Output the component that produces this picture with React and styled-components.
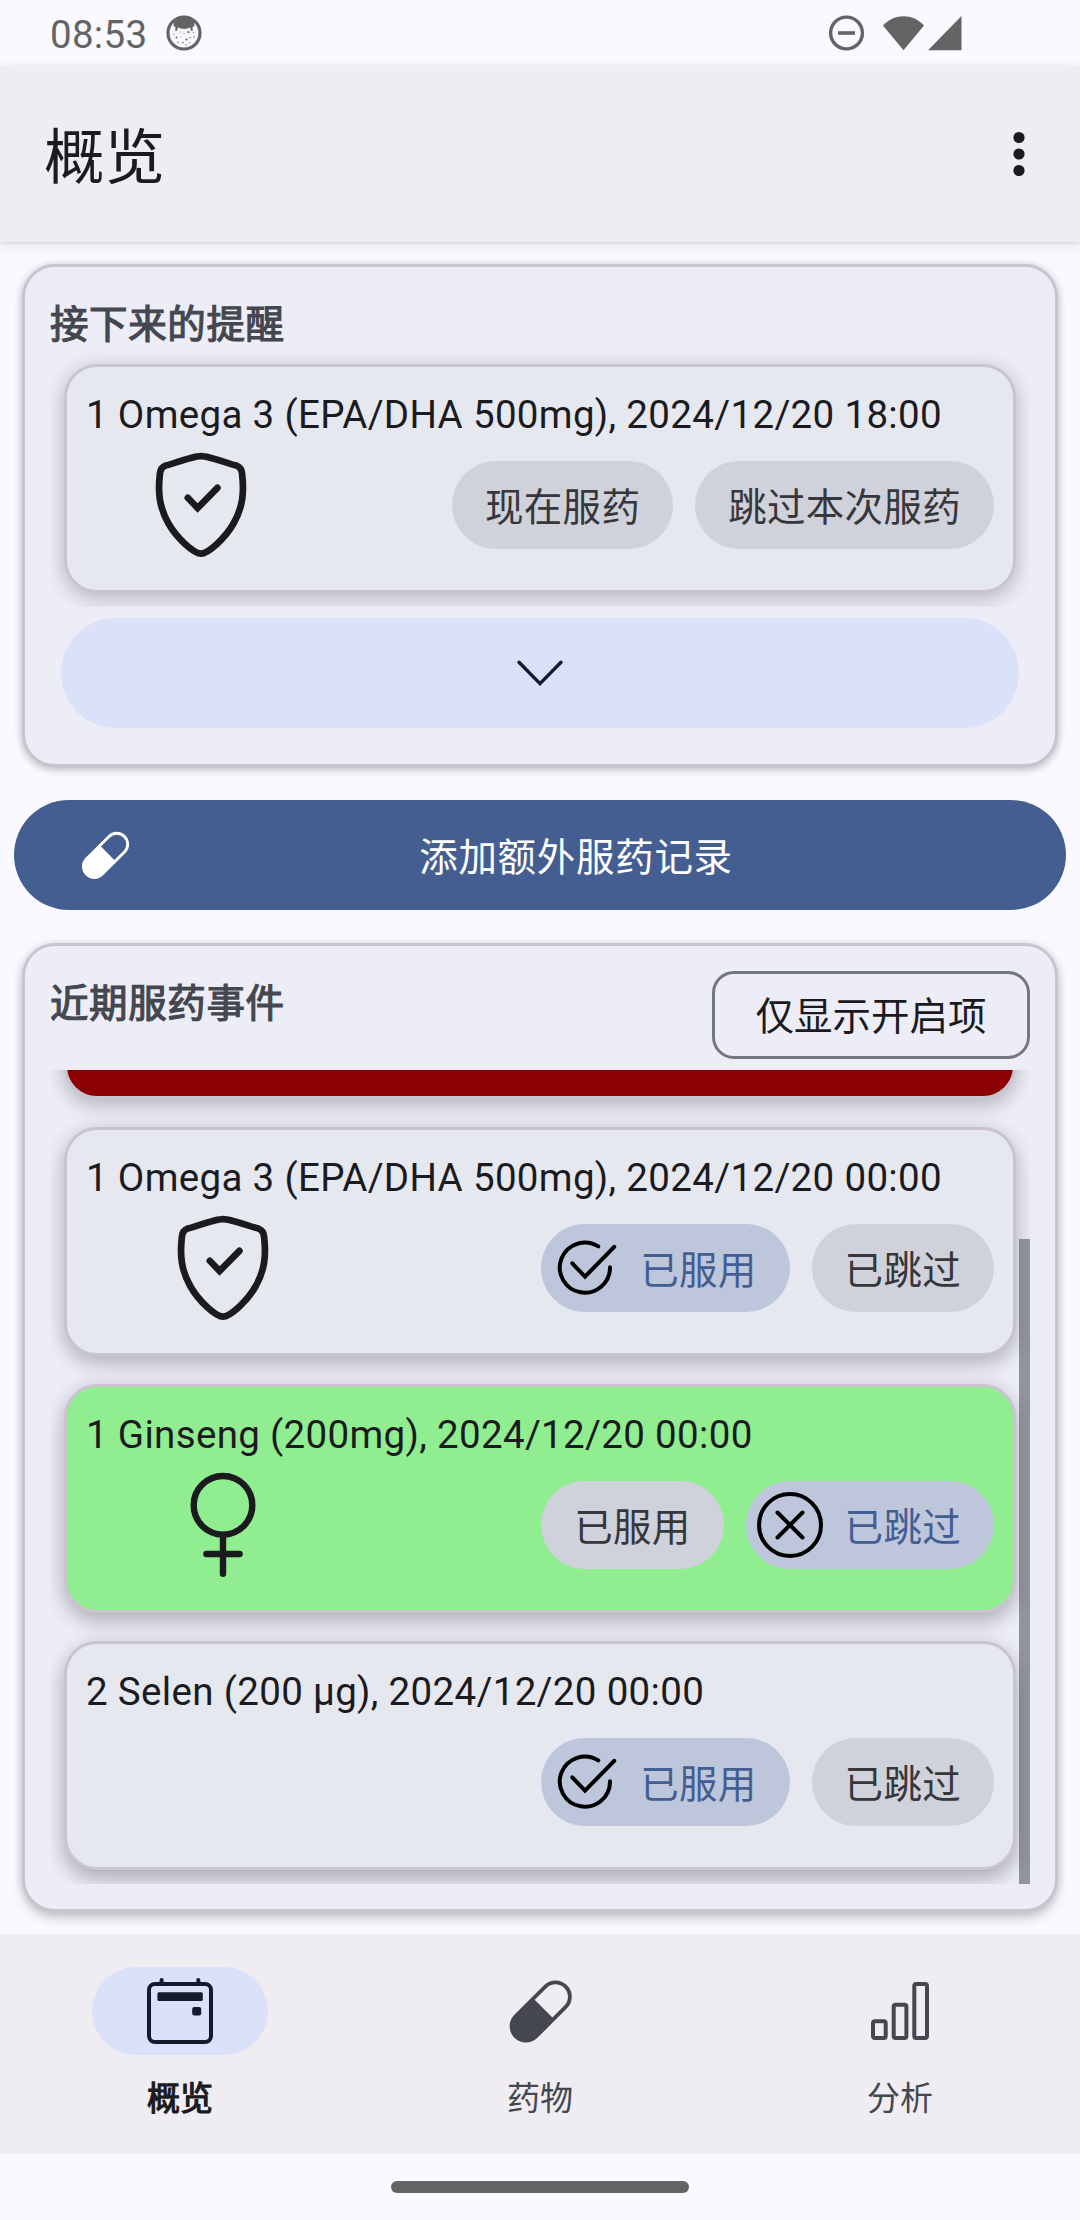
import React from "react";
import styled, { createGlobalStyle, css } from "styled-components";

const GlobalStyle = createGlobalStyle`
  *, *::before, *::after { box-sizing: border-box; }
  html, body { margin: 0; padding: 0; }
  body {
    background: #faf9ff;
    font-family: Roboto, "Noto Sans CJK SC", sans-serif;
    color: #1b1b1f;
  }
  button { font: inherit; color: inherit; border: 0; margin: 0; padding: 0; background: none; }
  svg { display: block; flex: none; }
`;

const Screen = styled.div`
  width: 1080px;
  height: 2220px;
  display: flex;
  flex-direction: column;
  background: #faf9ff;
  overflow: hidden;
`;

const StatusBar = styled.div`
  flex: none;
  height: 66px;
  padding: 0 118px 0 50px;
  display: flex;
  align-items: center;
  color: #646464;
`;

const Clock = styled.span`
  font-size: 38.5px;
  line-height: 66px;
  height: 66px;
  padding-top: 2px;
  letter-spacing: 0.3px;
  margin-right: 18.5px;
`;

const StatusIcons = styled.div`
  margin-left: auto;
  display: flex;
  align-items: center;
`;

const AppBar = styled.header`
  flex: none;
  height: 176px;
  padding: 0 44px;
  display: flex;
  align-items: center;
  justify-content: space-between;
  background: #efedf1;
  box-shadow: 0 1px 3px rgba(0, 0, 0, 0.12), 0 3px 14px rgba(0, 0, 0, 0.09);
`;

const AppTitle = styled.h1`
  margin: 0;
  padding-top: 10px;
  font-size: 60.5px;
  line-height: 80px;
  font-weight: 400;
`;

const MenuButton = styled.button`
  width: 34px;
  height: 66px;
  display: flex;
  justify-content: center;
  align-items: center;
`;

const Content = styled.main`
  flex: 1;
  min-height: 0;
  display: flex;
  flex-direction: column;
  padding: 22px 14px;
`;

const Panel = styled.section`
  flex: none;
  margin: 0 8px;
  height: ${(p) => p.$height}px;
  padding: ${(p) => p.$top}px 25px 0;
  border: 3px solid #cac4d0;
  border-radius: 33px;
  background: #ecedf6;
  box-shadow: 0 ${(p) => p.$lift}px ${(p) => p.$lift + 6}px rgba(0, 0, 0, 0.2),
    0 0 8px rgba(0, 0, 0, 0.1);
`;

const PanelHeader = styled.div`
  display: flex;
  justify-content: space-between;
  align-items: flex-start;
  height: ${(p) => p.$height}px;
`;

const PanelTitle = styled.h2`
  margin: 0;
  padding-top: ${(p) => p.$drop}px;
  font-size: 38.5px;
  line-height: 56px;
  letter-spacing: 0.6px;
  font-weight: 400;
  -webkit-text-stroke: 1.2px currentColor;
  color: #44474f;
`;

const OutlineButton = styled.button`
  width: 318px;
  height: 88px;
  padding-top: 4px;
  border: 3px solid #75777f;
  border-radius: 22px;
  font-size: 38.5px;
  line-height: 78px;
  text-align: center;
`;

const List = styled.div`
  position: relative;
  height: ${(p) => p.$height}px;
  overflow: hidden;
  display: flex;
  flex-direction: column;
  justify-content: flex-end;
  gap: 28px;
  padding: 14px;
`;

const ScrollThumb = styled.div`
  position: absolute;
  right: 0;
  bottom: 0;
  width: 11px;
  height: 645px;
  background: rgba(88, 92, 102, 0.62);
`;

const EventCard = styled.article`
  flex: none;
  height: 229px;
  padding: 19px 19px 0;
  border: 3px solid #cac4d0;
  border-radius: 33px;
  background: ${(p) => p.$color || "#e6e8f0"};
  box-shadow: 0 ${(p) => p.$lift + 1}px 20px rgba(0, 0, 0, ${(p) => 0.1 + p.$lift * 0.013}),
    0 2px 22px rgba(0, 0, 0, 0.09);
`;

const EventText = styled.div`
  height: 64px;
  padding-top: 1px;
  font-size: 38.5px;
  line-height: 55px;
  letter-spacing: 0.33px;
  white-space: nowrap;
`;

const EventRow = styled.div`
  height: 110px;
  display: flex;
  align-items: center;
  gap: 22px;
`;

const MedicineIcon = styled.div`
  flex: 1;
  display: flex;
  padding-left: 2px;
  &::before { content: ""; flex: 1; }
  &::after { content: ""; flex: 3; }
`;

const Chip = styled.button`
  height: 88px;
  padding: 0 33px;
  border-radius: 44px;
  display: flex;
  align-items: center;
  gap: 22px;
  font-size: 38.5px;
  letter-spacing: 0.3px;
  background: #cfd2da;
  color: #36363b;
  ${(p) =>
    p.$checked &&
    css`
      padding-left: 11px;
      background: #bdc6da;
      color: #435e93;
    `}
`;

const ChipLabel = styled.span`
  line-height: 56px;
  padding-top: 5px;
`;

const ExpandButton = styled.button`
  display: flex;
  align-items: center;
  justify-content: center;
  width: 958px;
  height: 110px;
  margin: 11px 11px 0;
  border-radius: 55px;
  background: #dce1fa;
`;

const AddButton = styled.button`
  flex: none;
  height: 110px;
  margin: 33px 0;
  padding: 0 66px;
  border-radius: 55px;
  display: flex;
  align-items: center;
  background: #455e91;
  color: #fff;
`;

const AddLabel = styled.span`
  flex: 1;
  padding: 6px 0 0 22px;
  font-size: 38.5px;
  line-height: 56px;
  letter-spacing: 0.7px;
  text-align: center;
`;

const NavBar = styled.nav`
  flex: none;
  height: 220px;
  display: grid;
  grid-template-columns: repeat(3, 1fr);
  background: #efedf1;
`;

const NavItem = styled.div`
  display: flex;
  flex-direction: column;
  align-items: center;
  padding-top: 33px;
  font-size: 33px;
  -webkit-text-stroke: ${(p) => (p.$active ? "1.2px" : "0")} currentColor;
  color: ${(p) => (p.$active ? "#1b1b1f" : "#44474f")};
`;

const NavIndicator = styled.div`
  width: 176px;
  height: 88px;
  border-radius: 44px;
  display: flex;
  align-items: center;
  justify-content: center;
  background: ${(p) => (p.$active ? "#dce1fa" : "transparent")};
  color: ${(p) => (p.$active ? "#151b2c" : "#44474f")};
`;

const NavLabel = styled.span`
  margin-top: 20px;
  line-height: 48px;
`;

const GestureArea = styled.div`
  flex: none;
  height: 66px;
  padding-top: 27px;
  display: flex;
  justify-content: center;
`;

const GestureHandle = styled.div`
  width: 298px;
  height: 12px;
  border-radius: 6px;
  background: #646464;
`;

const FaceIcon = () => (
  <svg width="36" height="36" viewBox="0 0 36 36">
    <circle cx="18" cy="18" r="16" fill="none" stroke="currentColor" strokeWidth="3.2" />
    <path
      fill="currentColor"
      d="M8 6C13 1 23 1 28 6L28.5 11L26.5 12L26.8 16L25 15.8L24 12.3C21 14.5 15 14.5 12 12.3L11 15.8L9.2 16L9.5 12L7.5 11Z"
    />
    <g fill="currentColor">
      <circle cx="10.5" cy="22.5" r="1" />
      <circle cx="20.5" cy="24.5" r="1.1" />
      <circle cx="22.5" cy="17.2" r="1.1" />
      <circle cx="14" cy="17" r="0.6" />
      <circle cx="18" cy="18.5" r="0.6" />
      <circle cx="15" cy="22" r="0.6" />
      <circle cx="24" cy="22.5" r="0.7" />
      <circle cx="28" cy="22" r="0.7" />
      <circle cx="8" cy="19" r="0.6" />
      <circle cx="27.5" cy="17.5" r="0.6" />
      <circle cx="12" cy="27.5" r="0.7" />
      <circle cx="17" cy="27.5" r="0.8" />
      <circle cx="23.5" cy="27.5" r="0.6" />
      <circle cx="20" cy="30" r="0.7" />
    </g>
  </svg>
);

const SystemIcons = () => (
  <svg width="134" height="36" viewBox="0 0 134 36" fill="currentColor">
    <circle cx="18.5" cy="18" r="15.9" fill="none" stroke="currentColor" strokeWidth="3.4" />
    <rect x="10" y="16.2" width="17" height="3.6" />
    <path d="M55 10.5C66.5-1.8 84.5-1.8 96 10.5L75.5 35.2Z" />
    <path d="M133.5 1V35.3H100Z" />
  </svg>
);

const MoreIcon = () => (
  <svg width="12" height="46" viewBox="0 0 12 46" fill="currentColor">
    <circle cx="6" cy="6.5" r="5.6" />
    <circle cx="6" cy="23" r="5.6" />
    <circle cx="6" cy="39.5" r="5.6" />
  </svg>
);

const ShieldIcon = () => (
  <svg width="110" height="110" viewBox="0 0 110 110" fill="none" stroke="currentColor" strokeWidth="6.7">
    <path d="M55 6.2C47 6.2 30 12.8 19.5 15.6C15.5 17 14.3 19.5 13.9 24C11.8 42 13 57 22.5 73.5C31 88.5 48 103.6 55 103.6C62 103.6 79 88.5 87.5 73.5C97 57 98.2 42 96.1 24C95.7 19.5 94.5 17 90.5 15.6C80 12.8 63 6.2 55 6.2Z" />
    <path d="M41.8 47.8L51.6 58L71.4 37.8" strokeLinecap="round" />
  </svg>
);

const FemaleIcon = () => (
  <svg width="110" height="110" viewBox="0 0 110 110" fill="none" stroke="currentColor" strokeWidth="6.4">
    <circle cx="55" cy="35.3" r="29.3" />
    <path d="M55 65V103.8M38.4 84H71.6" strokeLinecap="round" />
  </svg>
);

const TakenIcon = () => (
  <svg width="66" height="66" viewBox="0 0 66 66" fill="none" stroke="#000" strokeWidth="4" strokeLinecap="round">
    <path d="M46.3 11.4A25.1 25.1 0 1 0 58 32.3" />
    <path d="M20.3 28.3L33 41.7L62.2 11.8" />
  </svg>
);

const SkippedIcon = () => (
  <svg width="66" height="66" viewBox="0 0 66 66" fill="none" stroke="#000" strokeWidth="4" strokeLinecap="round">
    <circle cx="33" cy="33" r="31" />
    <path d="M20.5 20.5L45.5 45.5M45.5 20.5L20.5 45.5" />
  </svg>
);

const ChevronIcon = () => (
  <svg width="48" height="28" viewBox="0 0 48 28" fill="none" stroke="#151b2c" strokeWidth="3.4" strokeLinecap="round">
    <path d="M3 3.2L24 24.6L45 3.2" />
  </svg>
);

const PillIcon = ({ size }) => (
  <svg width={size} height={size} viewBox="0 0 66 66" fill="currentColor">
    <path
      transform="translate(33.7 33.5) rotate(-45)"
      fillRule="evenodd"
      d="M-20.9-16.3H20.9A16.3 16.3 0 0 1 20.9 16.3H-20.9A16.3 16.3 0 0 1-20.9-16.3ZM4-12.5V12.5H20.9A12.5 12.5 0 0 0 20.9-12.5Z"
    />
  </svg>
);

const CalendarIcon = () => (
  <svg width="66" height="66" viewBox="0 0 66 66" fill="currentColor">
    <rect x="2" y="6" width="62" height="58" rx="6" fill="none" stroke="currentColor" strokeWidth="4" />
    <path d="M14.6 2V6M51.3 2V6" stroke="currentColor" strokeWidth="4" strokeLinecap="round" />
    <rect x="10.4" y="14.3" width="45.4" height="8.7" rx="1.5" />
    <rect x="45.2" y="29" width="9" height="8.5" rx="2" />
  </svg>
);

const ChartIcon = () => (
  <svg width="66" height="66" viewBox="0 0 66 66" fill="none" stroke="currentColor" strokeWidth="4">
    <rect x="6" y="43.3" width="12.7" height="16.7" rx="2" />
    <rect x="26.7" y="26.8" width="12.7" height="33.2" rx="2" />
    <rect x="47.3" y="6" width="12.7" height="54" rx="2" />
  </svg>
);

const EventItem = ({ text, icon, color, lift = 5, children }) => (
  <EventCard $color={color} $lift={lift}>
    <EventText>{text}</EventText>
    <EventRow>
      <MedicineIcon>{icon}</MedicineIcon>
      {children}
    </EventRow>
  </EventCard>
);

const events = [
  { id: "red", text: "", color: "#8b0000", lift: 6 },
  { id: "omega", text: "1 Omega 3 (EPA/DHA 500mg), 2024/12/20 00:00", icon: <ShieldIcon />, state: "taken", lift: 7 },
  { id: "ginseng", text: "1 Ginseng (200mg), 2024/12/20 00:00", icon: <FemaleIcon />, color: "#90ee90", state: "skipped", lift: 8 },
  { id: "selen", text: "2 Selen (200 µg), 2024/12/20 00:00", state: "taken", lift: 9 },
];

const tabs = [
  { label: "概览", icon: <CalendarIcon />, active: true },
  { label: "药物", icon: <PillIcon size={66} /> },
  { label: "分析", icon: <ChartIcon /> },
];

export default function App() {
  return (
    <>
      <GlobalStyle />
      <Screen>
        <StatusBar>
          <Clock>08:53</Clock>
          <FaceIcon />
          <StatusIcons>
            <SystemIcons />
          </StatusIcons>
        </StatusBar>
        <AppBar>
          <AppTitle>概览</AppTitle>
          <MenuButton aria-label="menu">
            <MoreIcon />
          </MenuButton>
        </AppBar>
        <Content>
          <Panel $height={503} $top={25} $lift={3}>
            <PanelHeader $height={58}>
              <PanelTitle $drop={5}>接下来的提醒</PanelTitle>
            </PanelHeader>
            <List $height={257}>
              <EventItem text="1 Omega 3 (EPA/DHA 500mg), 2024/12/20 18:00" icon={<ShieldIcon />}>
                <Chip>
                  <ChipLabel>现在服药</ChipLabel>
                </Chip>
                <Chip>
                  <ChipLabel>跳过本次服药</ChipLabel>
                </Chip>
              </EventItem>
            </List>
            <ExpandButton aria-label="expand">
              <ChevronIcon />
            </ExpandButton>
          </Panel>
          <AddButton>
            <PillIcon size={50} />
            <AddLabel>添加额外服药记录</AddLabel>
          </AddButton>
          <Panel $height={969} $top={25} $lift={6}>
            <PanelHeader $height={99}>
              <PanelTitle $drop={5}>近期服药事件</PanelTitle>
              <OutlineButton>仅显示开启项</OutlineButton>
            </PanelHeader>
            <List $height={814}>
              {events.map((e) => (
                <EventItem key={e.id} text={e.text} icon={e.icon} color={e.color} lift={e.lift}>
                  {e.state && (
                    <>
                      <Chip $checked={e.state === "taken"}>
                        {e.state === "taken" && <TakenIcon />}
                        <ChipLabel>已服用</ChipLabel>
                      </Chip>
                      <Chip $checked={e.state === "skipped"}>
                        {e.state === "skipped" && <SkippedIcon />}
                        <ChipLabel>已跳过</ChipLabel>
                      </Chip>
                    </>
                  )}
                </EventItem>
              ))}
              <ScrollThumb />
            </List>
          </Panel>
        </Content>
        <NavBar>
          {tabs.map((t) => (
            <NavItem key={t.label} $active={t.active}>
              <NavIndicator $active={t.active}>{t.icon}</NavIndicator>
              <NavLabel>{t.label}</NavLabel>
            </NavItem>
          ))}
        </NavBar>
        <GestureArea>
          <GestureHandle />
        </GestureArea>
      </Screen>
    </>
  );
}
